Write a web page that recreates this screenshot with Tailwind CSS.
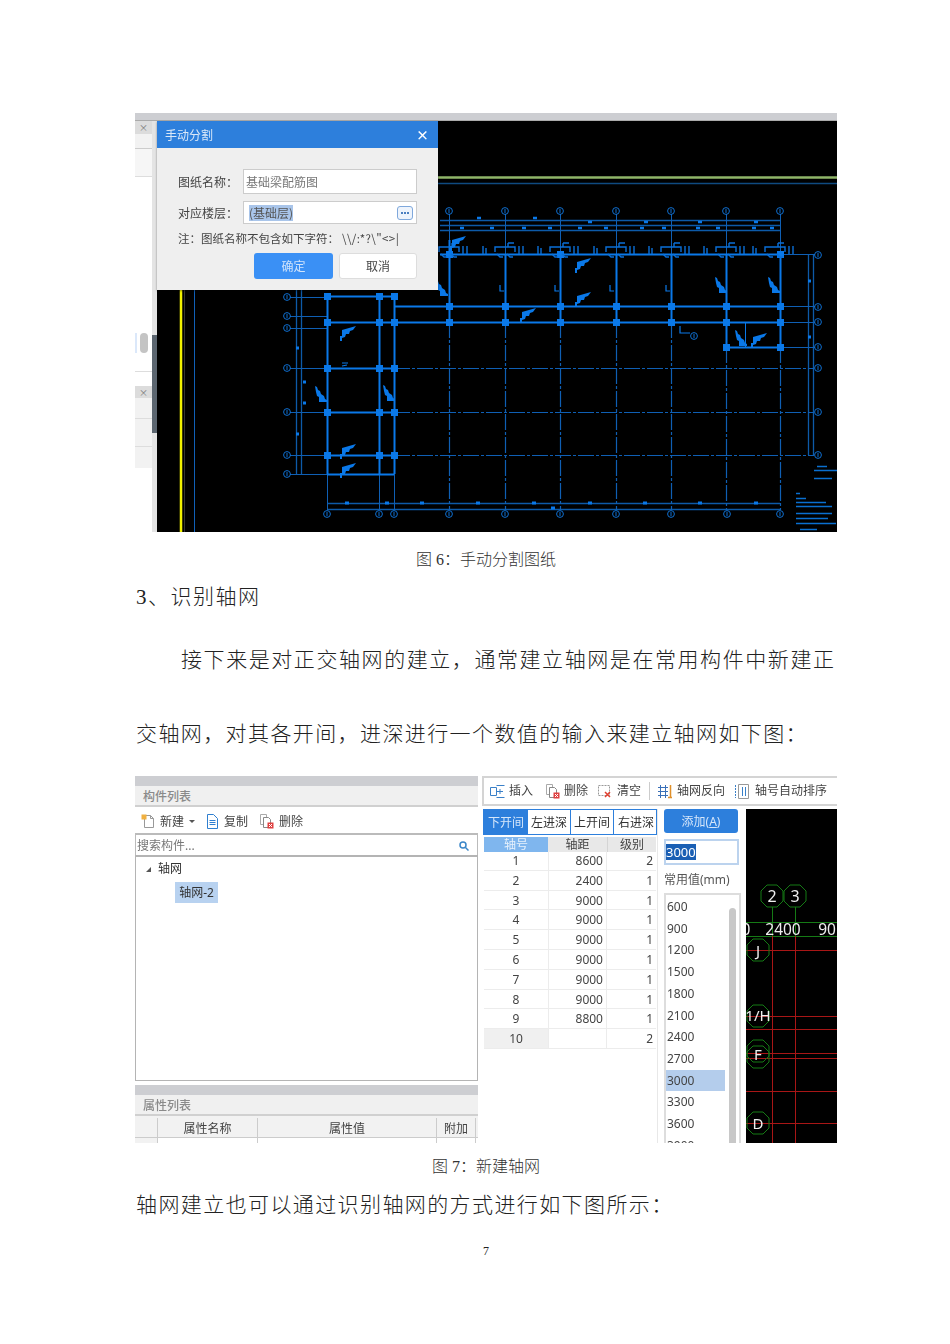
<!DOCTYPE html>
<html lang="zh-CN">
<head>
    <meta charset="UTF-8">
    <title>识别轴网</title>
    <script src="https://cdn.jsdelivr.net/npm/@tailwindcss/browser@4"></script>
</head>
<body class="bg-white font-['Liberation_Serif','Noto_Sans_CJK_SC',serif] text-[#222]">
<div class="w-[950px] h-[1344px] overflow-hidden pt-[113px] pl-[135px]">

    <!-- Figure 6 -->
    <div class="relative w-[702px] h-[419px] flex flex-col blur-[0.4px] font-['Noto_Sans_CJK_SC',sans-serif]">
        <div class="h-[8px] bg-[#cdced2] border-b border-[#aaa]"></div>
        <div class="flex flex-1">
            <!-- left strip -->
            <div class="relative w-[22px] bg-white flex flex-col border-r-[5px] border-[#e4e4e4]">
                <div class="h-[13px] bg-[#dcdcdc] flex items-center justify-center text-[9px] leading-none text-[#777]">×</div>
                <div class="h-[15px] bg-[#f2f2f2] border-b border-[#ccc]"></div>
                <div class="h-[28px] bg-[#f6f6f6] border-b border-[#ddd]"></div>
                <div class="h-[194px]"></div>
                <div class="h-[15px] border-t border-[#ddd]"></div>
                <div class="h-[12px] bg-[#dcdcdc] flex items-center justify-center text-[9px] leading-none text-[#777]">×</div>
                <div class="h-[21px] bg-[#f2f2f2] border-b border-[#ddd]"></div>
                <div class="h-[28px] bg-[#f2f2f2] border-b border-[#ddd]"></div>
                <div class="h-[21px] bg-[#f2f2f2]"></div>
                <div class="absolute left-[5px] top-[212px] w-[8px] h-[20px] rounded bg-[#c4c4c4]"></div>
                <div class="absolute left-0 top-[212px] w-[2px] h-[20px] bg-[#dbe8fa]"></div>
                <div class="absolute left-[17px] top-[214px] w-[5px] h-[98px] bg-[#5c6670]"></div>
            </div>
            <!-- drawing -->
            <svg class="flex-1 bg-black" viewBox="157 121 680 411" width="680" height="411" fill="none">
                <defs>
                    <path id="flag" d="M0 0l14-4-3 4-3 1-1 3-3 0-1 3-3 1v3h-2v-5h2z" fill="#0a78e8"/>
                    <path id="wedge" d="M0 0l2 1 1 3 2 1 1 3 3 2 1 3 2 1v2h-8v-5l-2-1-1-4z" fill="#0a78e8"/>
                    <path id="bump" d="M-22 -8v8M-19 -6v6M-10 -2v-5h20v5M14 -8v8M18 -8v8M3 -11h6M3 -11v4M-8 0l3 3h3M2 0l3 3h3" stroke="#0a6fd8" stroke-width="1.400"/>
                    <g id="bubble">
                        <circle r="3.400" stroke="#0f6fd0" stroke-width="1"/>
                        <path d="M0 -2v4" stroke="#0f6fd0"/>
                    </g>
                </defs>
                <path d="M181 121v411" stroke="#f2f200" stroke-width="2.500"/>
                <path d="M184.500 121v411" stroke="#333"/>
                <path d="M194.500 121v411" stroke="#1060b8"/>
                <path d="M438 177.500h399" stroke="#8fb569" stroke-width="2.500"/>
                <path d="M438 183.500h399" stroke="#0f4a80" stroke-width="1.500"/>

                <!-- dimension lines -->
                <path d="M440 220.500h340M440 225.500h340M440 230.500h340M296.500 290v184M301.500 290v184M808.500 254v201M813.500 254v201M327 503.500h453M327 509.500h453" stroke="#0d5aa8" stroke-width="1.300"/>
                <path d="M449.500 214v40M505.500 214v40M560.500 214v40M616.500 214v40M671.500 214v40M726.500 214v40M780.500 214v40M780 254.500h35M780 306.500h35M780 322.500h35M780 347.500h35M290 297.500h37M290 316.500h37M290 328.500h37M290 368.500h37M290 412.500h37M290 455.500h37M290 474.500h37M327.500 474v36M379.500 474v36M394.500 474v36" stroke="#0f5fb4"/>
                <path d="M449.500 322v188M505.500 322v188M560.500 322v188M616.500 322v188M671.500 322v188M726.500 347v163M780.500 347v163M394 368.500h420M394 412.500h420M394 455.500h420" stroke="#0f5fb4" stroke-width="1.200" stroke-dasharray="16 2 3 2"/>

                <!-- beams -->
                <path d="M440 254.500h340M394 306.500h386M327 322.500h453M327 296.500h67M327 368.500h67M327 412.500h67M327 455.500h67M327 474.500h67M726 347.500h54" stroke="#0a78e8" stroke-width="2"/>
                <path d="M449.500 240v82M505.500 254v68M560.500 254v68M616.500 254v68M671.500 254v68M726.500 254v93M780.500 254v93M327.500 296v178M379.500 296v178M394.500 296v178" stroke="#0a78e8" stroke-width="2"/>
                <path d="M745.500 322v25" stroke="#0a78e8"/>
                <path d="M446 303h7v7h-7zM502 303h7v7h-7zM557 303h7v7h-7zM613 303h7v7h-7zM668 303h7v7h-7zM723 303h7v7h-7zM777 303h7v7h-7z" fill="#0a78e8"/>
                <path d="M324 293h7v7h-7zM376 293h7v7h-7zM391 293h7v7h-7zM324 319h7v7h-7zM376 319h7v7h-7zM391 319h7v7h-7zM324 365h7v7h-7zM376 365h7v7h-7zM391 365h7v7h-7zM324 409h7v7h-7zM376 409h7v7h-7zM391 409h7v7h-7zM324 452h7v7h-7zM376 452h7v7h-7zM391 452h7v7h-7zM446 319h7v7h-7zM502 319h7v7h-7zM557 319h7v7h-7zM613 319h7v7h-7zM668 319h7v7h-7zM723 319h7v7h-7zM777 319h7v7h-7zM723 344h7v7h-7zM777 344h7v7h-7zM446 251h7v7h-7zM557 251h7v7h-7zM777 251h7v7h-7z" fill="#0a78e8"/>

                <!-- top beam details -->
                <use href="#bump" x="449" y="254"/><use href="#bump" x="505" y="254"/><use href="#bump" x="560" y="254"/><use href="#bump" x="616" y="254"/><use href="#bump" x="671" y="254"/><use href="#bump" x="726" y="254"/><use href="#bump" x="775" y="254"/>
                <use href="#flag" x="452" y="240"/><use href="#flag" x="577" y="262"/><use href="#flag" x="577" y="296"/><use href="#flag" x="522" y="312"/><use href="#flag" x="342" y="330"/><use href="#flag" x="342" y="448"/><use href="#flag" x="342" y="467"/><use href="#flag" x="753" y="337"/>
                <use href="#wedge" x="715" y="277"/><use href="#wedge" x="768" y="277"/><use href="#wedge" x="436" y="280"/><use href="#wedge" x="315" y="386"/><use href="#wedge" x="383" y="385"/><use href="#wedge" x="735" y="330"/>
                <path d="M500 285v6h4M555 285v6h4M610 285v6h4M666 285v6h4M680 326v7h10M342 366l5-1M342 363h6" stroke="#0a78e8" stroke-width="1.200"/>
                <path d="M477 218h4M533 218h4M588 222h4M644 222h4M698 222h4M754 222h4M460 228h4M490 228h4M522 228h4M548 228h4M578 228h4M604 228h4M640 228h4M662 228h4M696 228h4M716 228h4M752 228h4M770 228h4" stroke="#0a78e8" stroke-width="2.500"/>
                <path d="M345 503h4M385 503h4M420 503h4M476 503h4M532 503h4M588 503h4M643 503h4M698 503h4M754 503h4M551 508h4M296 348h3M303 382h3M303 403h3M296 434h3M808 281h3M808 337h3" stroke="#0a78e8" stroke-width="3"/>

                <!-- axis bubbles -->
                <use href="#bubble" x="449" y="211"/><use href="#bubble" x="505" y="211"/><use href="#bubble" x="560" y="211"/><use href="#bubble" x="616" y="211"/><use href="#bubble" x="671" y="211"/><use href="#bubble" x="726" y="211"/><use href="#bubble" x="780" y="211"/>
                <use href="#bubble" x="818" y="255"/><use href="#bubble" x="818" y="307"/><use href="#bubble" x="818" y="322"/><use href="#bubble" x="818" y="347"/><use href="#bubble" x="818" y="368"/><use href="#bubble" x="818" y="412"/><use href="#bubble" x="818" y="455"/>
                <use href="#bubble" x="287" y="297"/><use href="#bubble" x="287" y="316"/><use href="#bubble" x="287" y="328"/><use href="#bubble" x="287" y="368"/><use href="#bubble" x="287" y="412"/><use href="#bubble" x="287" y="455"/><use href="#bubble" x="287" y="474"/>
                <use href="#bubble" x="327" y="514"/><use href="#bubble" x="379" y="514"/><use href="#bubble" x="394" y="514"/><use href="#bubble" x="449" y="514"/><use href="#bubble" x="505" y="514"/><use href="#bubble" x="560" y="514"/><use href="#bubble" x="616" y="514"/><use href="#bubble" x="671" y="514"/><use href="#bubble" x="727" y="514"/><use href="#bubble" x="780" y="514"/>
                <use href="#bubble" x="694" y="336"/>

                <!-- legend -->
                <path d="M817 466.500h10M814 470.500h23M814 478.500h18M796 493.500h4M796 498.500h10M796 502.500h30M796 506.500h36M796 513.500h36M796 518.500h32M796 523.500h40M800 529.500h17" stroke="#0a6fd0" stroke-width="1.300"/>
            </svg>
        </div>

        <!-- dialog -->
        <div class="absolute left-[22px] top-[8px] w-[281px] h-[169px] flex flex-col bg-[#efefef] shadow-[0_1px_2px_rgba(0,0,0,0.4)] text-[#444]">
            <div class="h-[27px] shrink-0 bg-[#2d7fdc] text-[#dbe8f8] flex items-center justify-between pl-[8px] pr-[9px]">
                <span class="text-[12px]">手动分割</span>
                <span class="text-[13px] font-bold leading-none text-white">×</span>
            </div>
            <div class="flex flex-col pt-[21px] pl-[21px] pr-[21px] text-[12px]">
                <div class="flex items-center h-[25px]">
                    <span class="w-[65px]">图纸名称：</span>
                    <div class="flex-1 h-[25px] bg-white border border-[#ccc] flex items-center pl-[2px] text-[#777]">基础梁配筋图</div>
                </div>
                <div class="flex items-center h-[23px] mt-[7px]">
                    <span class="w-[65px]">对应楼层：</span>
                    <div class="flex-1 h-[23px] bg-white border border-[#ccc] flex items-center justify-between pl-[5px] pr-[3px] text-[#555]">
                        <span class="bg-[#a9c5ea] leading-[16px]">(基础层)</span>
                        <span class="w-[16px] h-[14px] rounded-[3px] border border-[#7fa8dc] bg-[#eef4fc] flex items-center justify-center gap-px">
                            <span class="w-[2px] h-[2px] bg-[#4a7fc0]"></span>
                            <span class="w-[2px] h-[2px] bg-[#4a7fc0]"></span>
                            <span class="w-[2px] h-[2px] bg-[#4a7fc0]"></span>
                        </span>
                    </div>
                </div>
                <div class="flex items-center h-[15px] mt-[7px] text-[11.500px] whitespace-nowrap -mr-[10px]">注：图纸名称不包含如下字符：<span class="ml-[3px] tracking-[0.4px]">\\/:*?\"&lt;&gt;|</span></div>
                <div class="flex justify-end gap-[6px] mt-[7px]">
                    <div class="w-[79px] h-[26px] rounded-[3px] bg-[#3a90f5] text-[#cfe3fb] flex items-center justify-center">确定</div>
                    <div class="w-[78px] h-[26px] rounded-[3px] bg-white border border-[#ddd] flex items-center justify-center text-[#444]">取消</div>
                </div>
            </div>
        </div>
    </div>

    <p class="w-[702px] text-center text-[16px] font-light text-[#333] leading-[22px] mt-[17px]">图 6：手动分割图纸</p>
    <p class="text-[21px] font-light tracking-[1.500px] leading-[30px] mt-[11px] pl-px">3、识别轴网</p>
    <p class="text-[21px] font-light tracking-[1.570px] leading-[30px] mt-[33px] pl-[46px] whitespace-nowrap">接下来是对正交轴网的建立，通常建立轴网是在常用构件中新建正</p>
    <p class="text-[21px] font-light tracking-[1.400px] leading-[30px] mt-[44px] pl-px whitespace-nowrap">交轴网，对其各开间，进深进行一个数值的输入来建立轴网如下图：</p>

    <!-- Figure 7 -->
    <div class="w-[702px] h-[367px] mt-[27px] flex overflow-hidden blur-[0.4px] font-['Noto_Sans','Noto_Sans_CJK_SC',sans-serif] text-[12px] text-[#444]">

        <!-- component list panel -->
        <div class="w-[343px] flex flex-col">
            <div class="h-[10px] bg-[#cdced2]"></div>
            <div class="h-[21px] bg-[#f0f0f0] flex items-center pl-[8px] pt-[2px] text-[#8a8a8a] font-medium border-b-2 border-[#d0d0d0]">构件列表</div>
            <div class="h-[28px] flex items-center pt-[3px] border-b-2 border-[#bbb]">
                <svg class="ml-[6px]" width="14" height="15" viewBox="0 0 14 15" fill="none"><path d="M3.500 1.500h6l3 3v9h-9z" fill="#fff" stroke="#999"/><path d="M9.500 1.500v3h3" stroke="#999"/><rect x="0.500" y="0.500" width="5" height="5" fill="#f0b040"/></svg>
                <span class="ml-[5px]">新建</span>
                <span class="ml-[5px] w-0 h-0 border-x-[3px] border-t-[3px] border-x-transparent border-t-[#555]"></span>
                <svg class="ml-[11px]" width="13" height="15" viewBox="0 0 13 15" fill="none"><path d="M1.500 0.500h6l4 4v10h-10z" stroke="#2f7fd0"/><path d="M3.500 6.500h6M3.500 8.500h6M3.500 10.500h6" stroke="#2f7fd0"/></svg>
                <span class="ml-[5px]">复制</span>
                <svg class="ml-[12px]" width="14" height="15" viewBox="0 0 14 15" fill="none"><path d="M0.500 0.500h6v10h-6z" stroke="#aaa"/><path d="M3.500 3.500h5l2 2v8h-7z" fill="#fff" stroke="#888"/><rect x="7.500" y="8.500" width="6" height="6" fill="#e04040"/><path d="M9 10l3 3M12 10l-3 3" stroke="#fff"/></svg>
                <span class="ml-[5px]">删除</span>
            </div>
            <div class="h-[20px] flex items-center justify-between pl-[1px] pr-[8px] pt-px text-[#777] border-x border-[#bbb]">
                <span>搜索构件...</span>
                <svg width="10" height="10" viewBox="0 0 10 10" fill="none"><circle cx="4" cy="4" r="3" stroke="#3a86c8" stroke-width="1.500"/><path d="M6.500 6.500l3 3" stroke="#3a86c8" stroke-width="1.500"/></svg>
            </div>
            <div class="h-[226px] border-x border-b border-t-2 border-[#b4b4b4] flex flex-col pl-[10px] pt-[2px] text-[#333]">
                <div class="flex items-center h-[20px]">
                    <span class="w-0 h-0 border-l-[5px] border-b-[5px] border-l-transparent border-b-[#555]"></span>
                    <span class="ml-[7px]">轴网</span>
                </div>
                <div class="ml-[29px] mt-[3px] w-[43px] h-[21px] bg-[#b8d2f0] flex items-center justify-center">轴网-2</div>
            </div>
            <div class="h-[4px]"></div>
            <div class="h-[10px] bg-[#cdced2]"></div>
            <div class="h-[21px] bg-[#f0f0f0] flex items-center pl-[8px] pt-[2px] text-[#8a8a8a] font-medium border-b-2 border-[#d0d0d0]">属性列表</div>
            <div class="h-[22px] grid grid-cols-[22px_100px_179px_40px] bg-[#f2f2f2] text-center leading-[21px] pt-[2px] border-b border-[#ccc]">
                <div></div>
                <div class="border-l border-[#ccc]">属性名称</div>
                <div class="border-l border-[#ccc]">属性值</div>
                <div class="border-x border-[#ccc]">附加</div>
            </div>
            <div class="grid grid-cols-[22px_100px_179px_40px] flex-1">
                <div class="bg-[#f2f2f2]"></div>
                <div class="border-l border-[#ccc]"></div>
                <div class="border-l border-[#ccc]"></div>
                <div class="border-x border-[#ccc]"></div>
            </div>
        </div>

        <!-- axis grid panel -->
        <div class="w-[355px] ml-[4px] flex flex-col">
            <div class="h-[30px] shrink-0 flex items-center border-t-2 border-b-2 border-l-2 border-[#d4d4d4]">
                <svg class="ml-[6px]" width="15" height="13" viewBox="0 0 15 13" fill="none"><path d="M0.500 2.500h6v8h-6z" stroke="#3a80c8"/><path d="M6.500 0.500h8M6.500 12.500h8M7 6.500h6M10 4v5" stroke="#3a80c8"/></svg>
                <span class="ml-[4px]">插入</span>
                <svg class="ml-[13px]" width="14" height="15" viewBox="0 0 14 15" fill="none"><path d="M0.500 0.500h6v10h-6z" stroke="#aaa"/><path d="M3.500 3.500h5l2 2v8h-7z" fill="#fff" stroke="#888"/><rect x="7.500" y="8.500" width="6" height="6" fill="#e04040"/><path d="M9 10l3 3M12 10l-3 3" stroke="#fff"/></svg>
                <span class="ml-[4px]">删除</span>
                <svg class="ml-[10px]" width="14" height="14" viewBox="0 0 14 14" fill="none"><path d="M0.500 1.500h11v10h-11z" stroke="#999" stroke-dasharray="2 1"/><path d="M7 8l5 5M12 8l-5 5" stroke="#e04030" stroke-width="1.500"/></svg>
                <span class="ml-[5px]">清空</span>
                <span class="ml-[8px] w-px h-[18px] bg-[#ccc]"></span>
                <svg class="ml-[7px]" width="15" height="15" viewBox="0 0 15 15" fill="none"><path d="M1 3.500h10M1 7.500h10M1 11.500h10M3.500 1v13M8.500 1v13" stroke="#3a70b8"/><path d="M13.500 1v12M11 13.500h4" stroke="#e0902a" stroke-width="1.500"/></svg>
                <span class="ml-[5px]">轴网反向</span>
                <svg class="ml-[10px]" width="15" height="15" viewBox="0 0 15 15" fill="none"><path d="M0.500 1v13" stroke="#3a80c8" stroke-dasharray="2 1"/><path d="M3.500 0.500h10v14h-10z" stroke="#999"/><path d="M7.500 3v9M10.500 3v9" stroke="#3a80c8"/></svg>
                <span class="ml-[5px]">轴号自动排序</span>
            </div>
            <div class="flex flex-1 pt-[3px] pl-px">
                <!-- table -->
                <div class="w-[174px] shrink-0 flex flex-col">
                    <div class="h-[26px] grid grid-cols-[44px_43px_43px_44px] border border-[#2d7fdc] text-center leading-[25px] text-[#333]">
                        <div class="bg-[#2d7fdc] text-[#d5e6fa]">下开间</div>
                        <div class="border-r border-[#2d7fdc]">左进深</div>
                        <div class="border-r border-[#2d7fdc]">上开间</div>
                        <div>右进深</div>
                    </div>
                    <div class="mt-[2px] ml-px h-[14px] grid grid-cols-[64px_59px_49px] text-center leading-[15px]">
                        <div class="bg-[#7fb6ee] text-[#e6f1fc]">轴号</div>
                        <div class="bg-[#e8e8e8]">轴距</div>
                        <div class="bg-[#e8e8e8] border-l border-[#d4d4d4]">级别</div>
                    </div>
                    <div class="ml-px grid grid-cols-[64px_59px_49px] auto-rows-[19.800px] leading-[20px] [&>div]:border-b [&>div]:border-[#ececec]">
                        <div class="text-center">1</div><div class="text-right pr-[3px] border-x">8600</div><div class="text-right pr-[3px]">2</div>
                        <div class="text-center">2</div><div class="text-right pr-[3px] border-x">2400</div><div class="text-right pr-[3px]">1</div>
                        <div class="text-center">3</div><div class="text-right pr-[3px] border-x">9000</div><div class="text-right pr-[3px]">1</div>
                        <div class="text-center">4</div><div class="text-right pr-[3px] border-x">9000</div><div class="text-right pr-[3px]">1</div>
                        <div class="text-center">5</div><div class="text-right pr-[3px] border-x">9000</div><div class="text-right pr-[3px]">1</div>
                        <div class="text-center">6</div><div class="text-right pr-[3px] border-x">9000</div><div class="text-right pr-[3px]">1</div>
                        <div class="text-center">7</div><div class="text-right pr-[3px] border-x">9000</div><div class="text-right pr-[3px]">1</div>
                        <div class="text-center">8</div><div class="text-right pr-[3px] border-x">9000</div><div class="text-right pr-[3px]">1</div>
                        <div class="text-center">9</div><div class="text-right pr-[3px] border-x">8800</div><div class="text-right pr-[3px]">1</div>
                        <div class="text-center bg-[#f0f0f0]">10</div><div class="border-x"></div><div class="text-right pr-[3px]">2</div>
                    </div>
                </div>
                <!-- add column -->
                <div class="w-[89px] shrink-0 flex flex-col pl-[6px] border-l border-[#e8e8e8]">
                    <div class="w-[74px] h-[24px] rounded-[3px] bg-[#2d7fdc] text-[#d5e6fa] flex items-center justify-center pt-[2px]">添加(<span class="underline">A</span>)</div>
                    <div class="w-[75px] h-[26px] mt-[6px] border-2 border-[#bcd3ee] flex items-center">
                        <span class="bg-[#1a5fb4] text-white text-[13px] leading-[16px]">3000</span>
                    </div>
                    <div class="mt-[6px] h-[17px] leading-[17px] text-[#555]">常用值(mm)</div>
                    <div class="relative mt-[5px] w-[77px] flex-1 border-2 border-[#ddd] border-b-0 flex flex-col pt-px overflow-hidden leading-[21.700px] text-[#444]">
                        <div class="pl-px">600</div>
                        <div class="pl-px">900</div>
                        <div class="pl-px">1200</div>
                        <div class="pl-px">1500</div>
                        <div class="pl-px">1800</div>
                        <div class="pl-px">2100</div>
                        <div class="pl-px">2400</div>
                        <div class="pl-px">2700</div>
                        <div class="pl-px w-[59px] bg-[#b4cdec]">3000</div>
                        <div class="pl-px">3300</div>
                        <div class="pl-px">3600</div>
                        <div class="pl-px">3900</div>
                        <div class="absolute right-[3px] top-[13px] bottom-0 w-[7px] rounded-t bg-[#c8c8c8]"></div>
                    </div>
                </div>
                <!-- preview -->
                <svg class="bg-black shrink-0" viewBox="746 809 91 334" width="91" height="334" fill="none">
                    <defs>
                        <path id="hex" d="M-5 -11h10l6 6v10l-6 6h-10l-6 -6v-10z" stroke="#157a15"/>
                    </defs>
                    <path d="M772.500 907v31M795.500 907v31M746 922.500h91M746 936.500h91" stroke="#157a15"/>
                    <path d="M772.500 936v207M795.500 936v207M746 950.500h91M746 1016.500h91M746 1029.500h91M746 1053.500h91M746 1058.500h91M746 1091.500h91M746 1123.500h91" stroke="#a81616"/>
                    <use href="#hex" x="772" y="896"/><use href="#hex" x="795" y="896"/>
                    <use href="#hex" x="758" y="950"/><use href="#hex" x="758" y="1016"/><use href="#hex" x="758" y="1051"/><use href="#hex" x="758" y="1057"/><use href="#hex" x="758" y="1123"/>
                    <g fill="#eee" font-family="Noto Sans, sans-serif" font-size="16" text-anchor="middle">
                        <text x="772" y="902">2</text>
                        <text x="795" y="902">3</text>
                        <text x="783" y="935" font-size="15.500">2400</text>
                        <text x="827" y="935" font-size="15.500">90</text>
                        <text x="746" y="935" font-size="15.500">0</text>
                        <text x="758" y="956" font-size="15">J</text>
                        <text x="758" y="1021" font-size="15">1/H</text>
                        <text x="758" y="1060" font-size="15">F</text>
                        <text x="758" y="1129" font-size="15">D</text>
                    </g>
                </svg>
            </div>
        </div>
    </div>

    <p class="w-[702px] text-center text-[16px] font-light text-[#333] leading-[22px] mt-[13px]">图 7：新建轴网</p>
    <p class="text-[21px] font-light tracking-[1.400px] leading-[30px] mt-[12px] pl-px whitespace-nowrap">轴网建立也可以通过识别轴网的方式进行如下图所示：</p>
    <p class="w-[702px] text-center text-[12px] leading-[16px] mt-[23px]">7</p>
</div>
</body>
</html>
